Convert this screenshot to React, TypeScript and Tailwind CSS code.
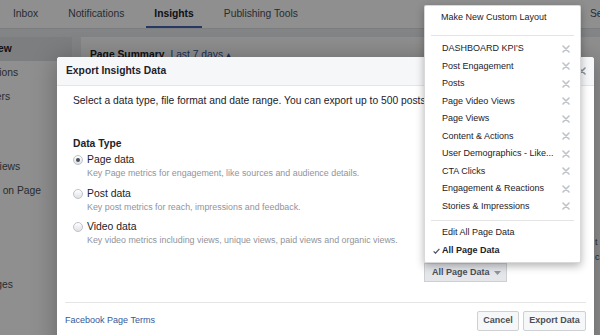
import React from "react";

const layouts = [
  "DASHBOARD KPI'S",
  "Post Engagement",
  "Posts",
  "Page Video Views",
  "Page Views",
  "Content & Actions",
  "User Demographics - Like...",
  "CTA Clicks",
  "Engagement & Reactions",
  "Stories & Impressions",
];

const sideItems = [
  "Overview",
  "Promotions",
  "Followers",
  "Likes",
  "Reach",
  "Page Views",
  "Actions on Page",
  "Posts",
  "Events",
  "Videos",
  "Messages",
];

const Cross = ({ color = "#bec2c9" }: { color?: string }) => (
  <svg width="8" height="8" viewBox="0 0 8 8" className="shrink-0">
    <path d="M1 1L7 7M7 1L1 7" stroke={color} strokeWidth="1.6" strokeLinecap="round" />
  </svg>
);

const Radio = ({ checked }: { checked?: boolean }) => (
  <span className="flex h-[10px] w-[10px] shrink-0 items-center justify-center rounded-full border border-[#bec2c9] bg-linear-to-b from-[#ffffff] to-[#dfe1e5]">
    {checked && <span className="h-[4px] w-[4px] rounded-full bg-[#4b4f56]" />}
  </span>
);

const DataOption = ({ label, desc, checked, className }: { label: string; desc: string; checked?: boolean; className?: string }) => (
  <div className={className}>
    <div className="flex h-[14px] items-center gap-[4px]">
      <Radio checked={checked} />
      <span className="text-[10.4px] text-[#1d2129]">{label}</span>
    </div>
    <div className="pl-[14px] text-[8.9px] leading-[13.5px] text-[#90949c]">{desc}</div>
  </div>
);

export default function App() {
  return (
    <div className="relative h-[335px] w-[600px] overflow-hidden bg-[#e9ebee] font-['Liberation_Sans',Arial,sans-serif]">
      {/* page underneath */}
      <div className="flex h-[29px] items-stretch border-b border-[#dddfe2] bg-white text-[10.3px] text-[#4b4f56]">
        <div className="flex w-[582px] shrink-0 items-stretch gap-[14px] pl-[5px]">
          <div className="flex items-center px-[8px]">Inbox</div>
          <div className="flex items-center px-[8px]">Notifications</div>
          <div className="flex items-center border-b-2 border-[#4267b2] px-[8px] pt-[2px] font-bold text-[#1d2129]">Insights</div>
          <div className="flex items-center px-[8px]">Publishing Tools</div>
        </div>
        <div className="flex items-center px-[8px]">Settings</div>
      </div>
      <div className="flex gap-[9px] pt-[8px]">
        <div className="h-[300px] w-[72px] shrink-0 overflow-hidden bg-white">
          <div className="-ml-[35px] w-[140px] text-[10.3px] text-[#4b4f56]">
            {sideItems.map((s, i) => (
              <div
                key={s + i}
                className={
                  i === 0
                    ? "flex h-[24px] items-center bg-[#dfe1e5] pl-[1px] font-bold text-[#1d2129]"
                    : "flex h-[23.5px] items-center pl-[1px]"
                }
              >
                {s}
              </div>
            ))}
          </div>
        </div>
        <div className="h-[300px] flex-1 bg-white pl-[9px] pt-[10px]">
          <div className="flex h-[16px] items-center gap-[6px] text-[10.3px]">
            <span className="font-bold text-[#1d2129]">Page Summary</span>
            <span className="text-[#365899]">Last 7 days ▴</span>
          </div>
          <div className="mt-[172px] pl-[505px] text-[9px] leading-[15px] text-[#4b4f56]">
            <div>t</div>
            <div>c.</div>
          </div>
        </div>
      </div>

      {/* dim overlay */}
      <div className="absolute inset-0 bg-black/[0.44]" />

      {/* modal */}
      <div className="absolute left-[57px] top-[57px] h-[300px] w-[537px] rounded-t-[3px] bg-white shadow-[0_2px_26px_rgba(0,0,0,0.3)]">
        <div className="flex h-[29px] items-center justify-between rounded-t-[3px] border-b border-[#e5e5e5] bg-[#f6f7f9] pl-[9px] pr-[8px]">
          <span className="text-[10.3px] font-bold text-[#1d2129]">Export Insights Data</span>
          <Cross color="#8d949e" />
        </div>
        <div className="pl-[16px] pt-[7px]">
          <div className="whitespace-nowrap text-[10.3px] leading-[16px] text-[#1d2129]">
            Select a data type, file format and date range. You can export up to 500 posts at a time.
          </div>
          <div className="mt-[27px] text-[10.3px] font-bold leading-[16px] text-[#1d2129]">Data Type</div>
          <DataOption
            className="mt-[1px]"
            checked
            label="Page data"
            desc="Key Page metrics for engagement, like sources and audience details."
          />
          <DataOption
            className="mt-[6px]"
            label="Post data"
            desc="Key post metrics for reach, impressions and feedback."
          />
          <DataOption
            className="mt-[6px]"
            label="Video data"
            desc="Key video metrics including views, unique views, paid views and organic views."
          />
          <div className="ml-[351px] mt-[15.5px] flex h-[19px] w-[83px] items-center gap-[4px] border border-[#ccd0d5] bg-[#e4e6ea] pl-[7px] text-[9px] font-bold text-[#4b4f56]">
            All Page Data
            <svg width="7" height="4" viewBox="0 0 7 4">
              <path d="M0 0H7L3.5 4Z" fill="#90949c" />
            </svg>
          </div>
        </div>
        <div className="mx-[8px] mt-[20px] flex items-center justify-between border-t border-[#e5e5e5] pt-[8px]">
          <span className="text-[9px] text-[#365899]">Facebook Page Terms</span>
          <div className="flex gap-[4px]">
            <button className="flex h-[20px] w-[42px] items-center justify-center rounded-[2px] border border-[#ced0d4] bg-[#f6f7f9] text-[9px] font-bold text-[#4b4f56]">
              Cancel
            </button>
            <button className="flex h-[20px] w-[63px] items-center justify-center rounded-[2px] border border-[#ced0d4] bg-[#f6f7f9] text-[9px] font-bold text-[#4b4f56]">
              Export Data
            </button>
          </div>
        </div>
      </div>

      {/* layout dropdown */}
      <div className="absolute left-[424px] top-[5px] w-[157px] rounded-[2px] border border-black/15 bg-white pb-[2px] pt-[4px] text-[9px] text-[#1d2129] shadow-[0_3px_8px_rgba(0,0,0,0.3)]">
        <div className="flex h-[16px] items-center pl-[16px]">Make New Custom Layout</div>
        <div className="mx-[6px] mt-[9px] border-t border-[#e5e5e5]" />
        <div className="pt-[4px]">
          {layouts.map((l) => (
            <div key={l} className="flex h-[17.5px] items-center justify-between pl-[17px] pr-[10px]">
              <span>{l}</span>
              <Cross />
            </div>
          ))}
        </div>
        <div className="mx-[6px] mt-[5px] border-t border-[#e5e5e5]" />
        <div className="pt-[3px]">
          <div className="flex h-[18px] items-center pl-[17px]">Edit All Page Data</div>
          <div className="flex h-[18px] items-center gap-[2px] pl-[8px] font-bold">
            <svg width="7" height="6" viewBox="0 0 7 6">
              <path d="M0.6 3.4L2.5 5.2L6.4 0.8" stroke="#4b4f56" strokeWidth="1.2" fill="none" />
            </svg>
            All Page Data
          </div>
        </div>
      </div>
    </div>
  );
}
